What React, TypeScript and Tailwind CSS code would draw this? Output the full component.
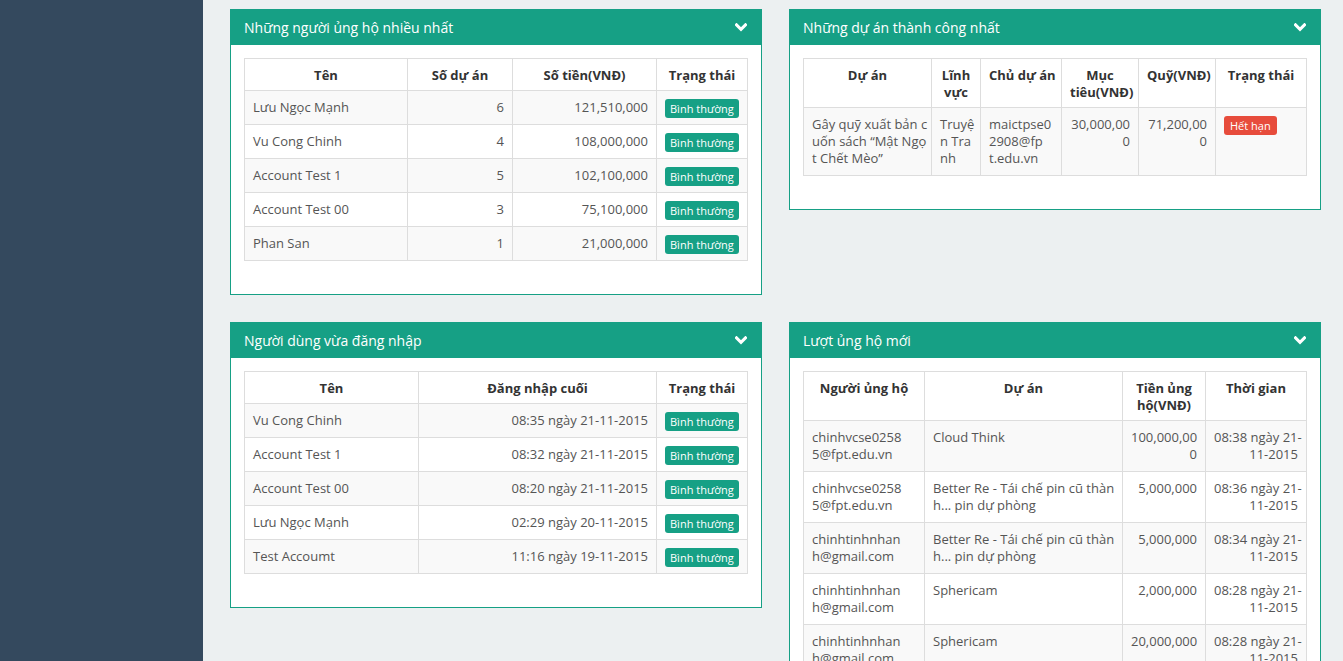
import React from "react";

const Chevron = () => (
  <svg width="12" height="9" viewBox="0 0 12 9" className="shrink-0">
    <polyline points="1.5,1.8 6,6.3 10.5,1.8" fill="none" stroke="#ffffff" strokeWidth="3" strokeLinecap="square" />
  </svg>
);

const Panel = ({ title, children }: { title: string; children: React.ReactNode }) => (
  <div className="border border-[#16a085] bg-white">
    <div className="h-[35px] bg-[#16a085] flex items-center justify-between pl-[13px] pr-[14px] text-white text-[14px] font-normal">
      <span>{title}</span>
      <Chevron />
    </div>
    <div className="px-[13px] pt-[13px] pb-[33px]">{children}</div>
  </div>
);

const Badge = ({ red }: { red?: boolean }) => (
  <span
    className={
      red
        ? "block w-fit whitespace-nowrap text-[11px] h-[19px] leading-[19px] px-[6px] rounded-[3px] bg-[#e74c3c] text-white"
        : "block w-fit whitespace-nowrap text-[11px] h-[19px] leading-[19px] px-[5px] rounded-[3px] bg-[#16a085] text-white"
    }
  >
    {red ? "Hết hạn" : "Bình thường"}
  </span>
);

const Lines = ({ l }: { l: string[] }) => (
  <>
    {l.map((s, i) => (
      <React.Fragment key={i}>
        {i > 0 && <br />}
        {s}
      </React.Fragment>
    ))}
  </>
);

const th = "border border-[#dddddd] px-[8px] pt-[8px] pb-[6px] leading-[17px] font-bold text-center align-top text-[#333333] whitespace-nowrap";
const td = "border border-[#dddddd] px-[8px] py-[8px] leading-[17px] align-top whitespace-nowrap";
const tdBadge = "border border-[#dddddd] px-[8px] pt-[8px] pb-[6px] align-top";

const topDonors = [
  ["Lưu Ngọc Mạnh", "6", "121,510,000"],
  ["Vu Cong Chinh", "4", "108,000,000"],
  ["Account Test 1", "5", "102,100,000"],
  ["Account Test 00", "3", "75,100,000"],
  ["Phan San", "1", "21,000,000"],
];

const logins = [
  ["Vu Cong Chinh", "08:35 ngày 21-11-2015"],
  ["Account Test 1", "08:32 ngày 21-11-2015"],
  ["Account Test 00", "08:20 ngày 21-11-2015"],
  ["Lưu Ngọc Mạnh", "02:29 ngày 20-11-2015"],
  ["Test Accoumt", "11:16 ngày 19-11-2015"],
];

const donations: string[][][] = [
  [["chinhvcse0258", "5@fpt.edu.vn"], ["Cloud Think"], ["100,000,00", "0"], ["08:38 ngày 21-", "11-2015"]],
  [["chinhvcse0258", "5@fpt.edu.vn"], ["Better Re - Tái chế pin cũ thàn", "h... pin dự phòng"], ["5,000,000"], ["08:36 ngày 21-", "11-2015"]],
  [["chinhtinhnhan", "h@gmail.com"], ["Better Re - Tái chế pin cũ thàn", "h... pin dự phòng"], ["5,000,000"], ["08:34 ngày 21-", "11-2015"]],
  [["chinhtinhnhan", "h@gmail.com"], ["Sphericam"], ["2,000,000"], ["08:28 ngày 21-", "11-2015"]],
  [["chinhtinhnhan", "h@gmail.com"], ["Sphericam"], ["20,000,000"], ["08:28 ngày 21-", "11-2015"]],
];

export default function App() {
  return (
    <div
      className="flex h-[661px] overflow-hidden bg-[#ecf0f1] text-[13px] text-[#555555]"
      style={{ fontFamily: '"Open Sans", "Noto Sans", sans-serif' }}
    >
      <aside className="w-[203px] shrink-0 bg-[#34495e]" />
      <main className="flex-1 pl-[27px] pr-[22px] pt-[9px]">
        <div className="grid grid-cols-2 gap-x-[27px] gap-y-[27px] items-start">
          <Panel title="Những người ủng hộ nhiều nhất">
            <table className="w-full table-fixed border-collapse">
              <thead>
                <tr>
                  <th className={th + " w-[163px]"}>Tên</th>
                  <th className={th + " w-[105px]"}>Số dự án</th>
                  <th className={th + " w-[144px]"}>Số tiền(VNĐ)</th>
                  <th className={th}>Trạng thái</th>
                </tr>
              </thead>
              <tbody>
                {topDonors.map((r, i) => (
                  <tr key={i} className={i % 2 === 0 ? "bg-[#f9f9f9]" : "bg-white"}>
                    <td className={td}>{r[0]}</td>
                    <td className={td + " text-right"}>{r[1]}</td>
                    <td className={td + " text-right"}>{r[2]}</td>
                    <td className={tdBadge}>
                      <Badge />
                    </td>
                  </tr>
                ))}
              </tbody>
            </table>
          </Panel>

          <Panel title="Những dự án thành công nhất">
            <table className="w-full table-fixed border-collapse">
              <thead>
                <tr>
                  <th className={th + " w-[128px]"}>Dự án</th>
                  <th className={th + " w-[49px]"}>
                    <Lines l={["Lĩnh", "vực"]} />
                  </th>
                  <th className={th + " w-[81px]"}>Chủ dự án</th>
                  <th className={th + " w-[77px]"}>
                    <Lines l={["Mục", "tiêu(VNĐ)"]} />
                  </th>
                  <th className={th + " w-[77px]"}>Quỹ(VNĐ)</th>
                  <th className={th}>Trạng thái</th>
                </tr>
              </thead>
              <tbody>
                <tr className="bg-[#f9f9f9]">
                  <td className={td}>
                    <Lines l={["Gây quỹ xuất bản c", "uốn sách “Mật Ngọ", "t Chết Mèo”"]} />
                  </td>
                  <td className={td}>
                    <Lines l={["Truyệ", "n Tra", "nh"]} />
                  </td>
                  <td className={td}>
                    <Lines l={["maictpse0", "2908@fp", "t.edu.vn"]} />
                  </td>
                  <td className={td + " text-right"}>
                    <Lines l={["30,000,00", "0"]} />
                  </td>
                  <td className={td + " text-right"}>
                    <Lines l={["71,200,00", "0"]} />
                  </td>
                  <td className={tdBadge}>
                    <Badge red />
                  </td>
                </tr>
              </tbody>
            </table>
          </Panel>

          <Panel title="Người dùng vừa đăng nhập">
            <table className="w-full table-fixed border-collapse">
              <thead>
                <tr>
                  <th className={th + " w-[174px]"}>Tên</th>
                  <th className={th + " w-[238px]"}>Đăng nhập cuối</th>
                  <th className={th}>Trạng thái</th>
                </tr>
              </thead>
              <tbody>
                {logins.map((r, i) => (
                  <tr key={i} className={i % 2 === 0 ? "bg-[#f9f9f9]" : "bg-white"}>
                    <td className={td}>{r[0]}</td>
                    <td className={td + " text-right"}>{r[1]}</td>
                    <td className={tdBadge}>
                      <Badge />
                    </td>
                  </tr>
                ))}
              </tbody>
            </table>
          </Panel>

          <Panel title="Lượt ủng hộ mới">
            <table className="w-full table-fixed border-collapse">
              <thead>
                <tr>
                  <th className={th + " w-[121px]"}>Người ủng hộ</th>
                  <th className={th + " w-[198px]"}>Dự án</th>
                  <th className={th + " w-[83px]"}>
                    <Lines l={["Tiền ủng", "hộ(VNĐ)"]} />
                  </th>
                  <th className={th}>Thời gian</th>
                </tr>
              </thead>
              <tbody>
                {donations.map((r, i) => (
                  <tr key={i} className={i % 2 === 0 ? "bg-[#f9f9f9]" : "bg-white"}>
                    <td className={td}>
                      <Lines l={r[0]} />
                    </td>
                    <td className={td}>
                      <Lines l={r[1]} />
                    </td>
                    <td className={td + " text-right"}>
                      <Lines l={r[2]} />
                    </td>
                    <td className={td + " text-right"}>
                      <Lines l={r[3]} />
                    </td>
                  </tr>
                ))}
              </tbody>
            </table>
          </Panel>
        </div>
      </main>
    </div>
  );
}
